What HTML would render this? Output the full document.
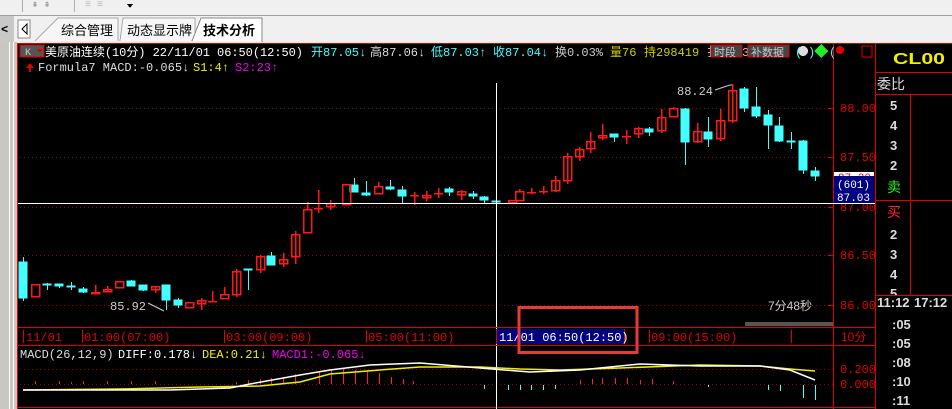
<!DOCTYPE html>
<html><head><meta charset="utf-8"><style>
html,body{margin:0;padding:0;width:952px;height:409px;overflow:hidden;background:#f0f0f0}
svg{position:absolute;left:0;top:0;font-family:"Liberation Mono","Noto Sans CJK SC",monospace;font-size:12px}
.cn{font-family:"Liberation Sans","Noto Sans CJK SC",sans-serif}
</style></head><body>
<svg width="952" height="409" viewBox="0 0 952 409" xmlns="http://www.w3.org/2000/svg" shape-rendering="crispEdges">
<rect x="0" y="0" width="952" height="15" fill="#f0f0f0"/>
<line x1="0" y1="15.5" x2="952" y2="15.5" stroke="#a0a0a0"/>
<line x1="22.5" y1="0" x2="22.5" y2="12" stroke="#b0b0b0"/>
<line x1="74.5" y1="0" x2="74.5" y2="12" stroke="#b0b0b0"/>
<text x="32" y="7" fill="#999" font-size="10">⇞ ⇞</text>
<text x="85" y="7" fill="#bbb" font-size="10">≡ ≡</text>
<path d="M127 4 L133 4 L130 8 Z" fill="#000"/>
<rect x="0" y="16" width="952" height="27" fill="#f0f0f0"/>
<rect x="0" y="16" width="14" height="26" fill="#c8c8c8"/>
<text x="1" y="33" fill="#000" font-size="12" font-weight="bold">&lt;</text>
<rect x="18" y="20" width="12" height="18" fill="#fff" stroke="#888"/>
<path d="M27 24 L22 29 L27 34 Z" fill="none" stroke="#000"/>
<path d="M35 41 L58 18 L118 18 L118 41" fill="#f6f6f6" stroke="#aaa"/>
<text x="61" y="35" class="cn" font-size="13" fill="#000">综合管理</text>
<path d="M120 41 L123 18 L195 18 L195 41" fill="#f6f6f6" stroke="#aaa"/>
<text x="127" y="35" class="cn" font-size="13" fill="#000">动态显示牌</text>
<path d="M192 41 L201 18 L262 18 L262 42" fill="#fff" stroke="#888"/>
<text x="203" y="35" class="cn" font-size="13" font-weight="bold" fill="#000">技术分析</text>
<rect x="0" y="42" width="17" height="367" fill="#c8c8c0"/>
<line x1="9.5" y1="42" x2="9.5" y2="409" stroke="#fff"/>
<line x1="13.5" y1="42" x2="13.5" y2="409" stroke="#fff"/>
<rect x="17" y="43" width="935" height="366" fill="#000"/>
<line x1="17" y1="43.5" x2="952" y2="43.5" stroke="#e00000"/>
<line x1="17.5" y1="43" x2="17.5" y2="409" stroke="#e00000"/>
<line x1="833.5" y1="44" x2="833.5" y2="409" stroke="#e00000"/>
<line x1="875.5" y1="44" x2="875.5" y2="409" stroke="#e00000"/>
<line x1="17" y1="407.5" x2="875" y2="407.5" stroke="#e00000"/>
<rect x="20" y="45" width="24" height="12" fill="#555" stroke="#e00000"/>
<text x="25" y="55" fill="#ccc" font-size="10">K</text>
<path d="M37 49 L43 49 L40 53 Z" fill="#e00000"/>
<text x="45" y="56" fill="#fff" textLength="258">美原油连续(10分) 22/11/01 06:50(12:50)</text>
<text x="311" y="56" fill="#4ff">开87.05↓</text>
<text x="370" y="56" fill="#ddd">高87.06↓</text>
<text x="431" y="56" fill="#4ff">低87.03↑</text>
<text x="493" y="56" fill="#4ff">收87.04↓</text>
<text x="555" y="56" fill="#ccc">换0.03%</text>
<text x="610" y="56" fill="#cc0">量76</text>
<text x="644" y="56" fill="#cc0">持298419</text>
<text x="707" y="56" fill="#ccc">扌</text>
<rect x="711" y="45" width="31" height="12" fill="#444" stroke="#e00000"/>
<text x="714" y="56" fill="#ccc" class="cn" font-size="11">时段</text>
<text x="742" y="56" fill="#ccc">3</text>
<rect x="748" y="45" width="41" height="12" fill="#444" stroke="#e00000"/>
<text x="751" y="56" fill="#ccc" class="cn" font-size="11">补数据</text>
<circle cx="803" cy="51" r="5" fill="#ddd"/>
<text x="795" y="56" fill="#4ff">(</text><text x="808" y="56" fill="#4ff">)</text>
<path d="M821 44 L828 51 L821 58 L814 51 Z" fill="#2e2"/>
<text x="829" y="56" fill="#4ff">(</text>
<circle cx="840" cy="50" r="4" fill="#e00000"/>
<rect x="862" y="46" width="10" height="11" fill="none" stroke="#e00000"/>
<path d="M26 68 L30 63 L34 68 Z M29 67 h2 v5 h-2z" fill="#e00000"/>
<text x="38" y="71" fill="#ddd">Formula7 MACD:-0.065↓</text>
<text x="193" y="71" fill="#ee0">S1:4↑</text>
<text x="235" y="71" fill="#e0e">S2:23↑</text>
<g stroke="#a00000" stroke-dasharray="1,3">
<line x1="20" y1="108.5" x2="833" y2="108.5"/>
<line x1="20" y1="157.5" x2="833" y2="157.5"/>
<line x1="20" y1="207.5" x2="833" y2="207.5"/>
<line x1="20" y1="255.5" x2="833" y2="255.5"/>
<line x1="20" y1="305.5" x2="833" y2="305.5"/>
<line x1="20" y1="369.5" x2="833" y2="369.5"/>
<line x1="20" y1="384.5" x2="833" y2="384.5"/>
</g>
<g fill="#e00000" font-size="12">
<text x="840" y="112">88.00</text>
<text x="840" y="161">87.50</text>
<text x="840" y="211">87.00</text>
<text x="840" y="259">86.50</text>
<text x="840" y="309">86.00</text>
<text x="840" y="373">0.200</text>
<text x="840" y="388">0.000</text>
</g>
<g stroke="#e00000"><line x1="828" y1="108.5" x2="833" y2="108.5"/><line x1="828" y1="157.5" x2="833" y2="157.5"/><line x1="828" y1="207.5" x2="833" y2="207.5"/><line x1="828" y1="255.5" x2="833" y2="255.5"/><line x1="828" y1="305.5" x2="833" y2="305.5"/></g>
<g stroke-width="1">
<g stroke="#4ff" fill="#4ff">
<line x1="23.5" y1="257" x2="23.5" y2="301"/><rect x="19" y="262" width="8" height="36"/>
<line x1="47.5" y1="283" x2="47.5" y2="290"/><rect x="43" y="284" width="8" height="1"/>
<line x1="59.5" y1="284" x2="59.5" y2="288"/><rect x="55" y="284" width="8" height="2"/>
<line x1="71.5" y1="282" x2="71.5" y2="290"/><rect x="67" y="286" width="8" height="1"/>
<line x1="83.5" y1="287" x2="83.5" y2="293"/><rect x="79" y="289" width="8" height="3"/>
<line x1="131.5" y1="280" x2="131.5" y2="286"/><rect x="127" y="281" width="8" height="5"/>
<line x1="143.5" y1="285" x2="143.5" y2="291"/><rect x="139" y="285" width="8" height="5"/>
<line x1="166.5" y1="285" x2="166.5" y2="310"/><rect x="162" y="285" width="8" height="15"/>
<line x1="178.5" y1="298" x2="178.5" y2="308"/><rect x="174" y="300" width="8" height="5"/>
<line x1="248.5" y1="269" x2="248.5" y2="290"/><rect x="244" y="269" width="8" height="1"/>
<line x1="271.5" y1="252" x2="271.5" y2="265"/><rect x="267" y="256" width="8" height="9"/>
<line x1="354.5" y1="178" x2="354.5" y2="192"/><rect x="350" y="185" width="8" height="7"/>
<line x1="366.5" y1="181" x2="366.5" y2="196"/><rect x="362" y="193" width="8" height="2"/>
<line x1="390.5" y1="180" x2="390.5" y2="190"/><rect x="386" y="187" width="8" height="2"/>
<line x1="402.5" y1="186" x2="402.5" y2="203"/><rect x="398" y="190" width="8" height="6"/>
<line x1="449.5" y1="187" x2="449.5" y2="196"/><rect x="445" y="189" width="8" height="3"/>
<line x1="473.5" y1="191" x2="473.5" y2="199"/><rect x="469" y="194" width="8" height="2"/>
<line x1="484.5" y1="196" x2="484.5" y2="203"/><rect x="480" y="197" width="8" height="3"/>
<line x1="496.5" y1="199" x2="496.5" y2="203"/><rect x="492" y="201" width="8" height="1"/>
<line x1="614.5" y1="134" x2="614.5" y2="142"/><rect x="610" y="134" width="8" height="3"/>
<line x1="649.5" y1="127" x2="649.5" y2="136"/><rect x="645" y="129" width="8" height="3"/>
<line x1="685.5" y1="108" x2="685.5" y2="165"/><rect x="681" y="109" width="8" height="33"/>
<line x1="708.5" y1="117" x2="708.5" y2="147"/><rect x="704" y="132" width="8" height="7"/>
<line x1="744.5" y1="87" x2="744.5" y2="112"/><rect x="740" y="89" width="8" height="19"/>
<line x1="756.5" y1="87" x2="756.5" y2="118"/><rect x="752" y="107" width="8" height="9"/>
<line x1="768.5" y1="110" x2="768.5" y2="149"/><rect x="764" y="115" width="8" height="10"/>
<line x1="779.5" y1="117" x2="779.5" y2="142"/><rect x="775" y="126" width="8" height="15"/>
<line x1="791.5" y1="132" x2="791.5" y2="149"/><rect x="787" y="141" width="8" height="1"/>
<line x1="803.5" y1="140" x2="803.5" y2="174"/><rect x="799" y="141" width="8" height="29"/>
<line x1="815.5" y1="167" x2="815.5" y2="181"/><rect x="811" y="171" width="8" height="5"/>
</g>
<g stroke="#ff1818" fill="none" stroke-width="1.5">
<rect x="31.5" y="284.5" width="8" height="12"/>
<line x1="95.5" y1="285" x2="95.5" y2="293"/><rect x="91.5" y="292.5" width="8" height="1" fill="#f22"/>
<line x1="107.5" y1="286" x2="107.5" y2="292"/><rect x="103.5" y="289.5" width="8" height="2"/>
<rect x="115.5" y="281.5" width="8" height="6"/>
<line x1="155.5" y1="286" x2="155.5" y2="293"/><rect x="151.5" y="286.5" width="8" height="3"/>
<rect x="185.5" y="302.5" width="8" height="5"/>
<line x1="201.5" y1="298" x2="201.5" y2="310"/><rect x="197.5" y="300.5" width="8" height="3"/>
<line x1="212.5" y1="291" x2="212.5" y2="301"/><line x1="208" y1="301.5" x2="217" y2="301.5"/>
<line x1="224.5" y1="287" x2="224.5" y2="294"/><rect x="220.5" y="294.5" width="8" height="4"/>
<line x1="236.5" y1="269" x2="236.5" y2="297"/><rect x="232.5" y="271.5" width="8" height="23"/>
<line x1="260.5" y1="255" x2="260.5" y2="273"/><rect x="256.5" y="256.5" width="8" height="13"/>
<line x1="283.5" y1="253" x2="283.5" y2="267"/><rect x="279.5" y="259.5" width="8" height="4"/>
<line x1="295.5" y1="231" x2="295.5" y2="264"/><rect x="291.5" y="234.5" width="8" height="22"/>
<line x1="307.5" y1="202" x2="307.5" y2="209"/><rect x="303.5" y="209.5" width="8" height="23"/>
<line x1="318.5" y1="190" x2="318.5" y2="213"/><line x1="314" y1="208.5" x2="323" y2="208.5"/>
<line x1="330.5" y1="200" x2="330.5" y2="210"/><rect x="326.5" y="203.5" width="8" height="3"/>
<rect x="342.5" y="184.5" width="8" height="20"/>
<line x1="378.5" y1="182" x2="378.5" y2="186"/><rect x="374.5" y="186.5" width="8" height="7"/>
<line x1="414.5" y1="192" x2="414.5" y2="205"/><line x1="410" y1="195.5" x2="419" y2="195.5"/>
<line x1="426.5" y1="191" x2="426.5" y2="201"/><rect x="422.5" y="195.5" width="8" height="2"/>
<line x1="438.5" y1="188" x2="438.5" y2="198"/><line x1="434" y1="193.5" x2="443" y2="193.5"/>
<line x1="461.5" y1="190" x2="461.5" y2="200"/><rect x="457.5" y="191.5" width="8" height="3"/>
<rect x="508.5" y="200.5" width="8" height="2"/>
<line x1="519.5" y1="189" x2="519.5" y2="191"/><rect x="515.5" y="191.5" width="8" height="9"/>
<line x1="531.5" y1="188" x2="531.5" y2="194"/><line x1="527" y1="192.5" x2="536" y2="192.5"/>
<line x1="543.5" y1="186" x2="543.5" y2="194"/><line x1="539" y1="191.5" x2="548" y2="191.5"/>
<line x1="555.5" y1="176" x2="555.5" y2="192"/><rect x="551.5" y="180.5" width="8" height="10"/>
<line x1="567.5" y1="153" x2="567.5" y2="184"/><rect x="563.5" y="156.5" width="8" height="24"/>
<line x1="579.5" y1="147" x2="579.5" y2="161"/><rect x="575.5" y="149.5" width="8" height="7"/>
<line x1="590.5" y1="132" x2="590.5" y2="153"/><rect x="586.5" y="141.5" width="8" height="7"/>
<line x1="602.5" y1="124" x2="602.5" y2="140"/><rect x="598.5" y="135.5" width="8" height="2"/>
<line x1="626.5" y1="130" x2="626.5" y2="144"/><line x1="622" y1="136.5" x2="631" y2="136.5"/>
<line x1="638.5" y1="127" x2="638.5" y2="138"/><rect x="634.5" y="128.5" width="8" height="5"/>
<line x1="661.5" y1="109" x2="661.5" y2="133"/><rect x="657.5" y="117.5" width="8" height="13"/>
<line x1="673.5" y1="107" x2="673.5" y2="108"/><rect x="669.5" y="108.5" width="8" height="8"/>
<line x1="697.5" y1="123" x2="697.5" y2="143"/><rect x="693.5" y="131.5" width="8" height="10"/>
<line x1="720.5" y1="109" x2="720.5" y2="141"/><rect x="716.5" y="120.5" width="8" height="18"/>
<line x1="732.5" y1="84" x2="732.5" y2="123"/><rect x="728.5" y="90.5" width="8" height="30"/>
</g>
</g>
<text x="110" y="310" fill="#ccc">85.92</text>
<line x1="148" y1="303" x2="164" y2="311" stroke="#ccc" shape-rendering="auto"/>
<text x="677" y="95" fill="#ccc">88.24</text>
<path d="M715 90 L730 85 L732 85" stroke="#ccc" fill="none" shape-rendering="auto"/>
<text x="768" y="310" fill="#ccc" class="cn" font-size="12">7分48秒</text>
<rect x="745" y="322" width="88" height="4" fill="#555"/>
<line x1="18" y1="203.5" x2="875" y2="203.5" stroke="#fff"/>
<line x1="496.5" y1="83" x2="496.5" y2="409" stroke="#fff"/>
<rect x="834" y="172" width="40" height="5" fill="#fff"/>
<text x="838" y="181" fill="#e00000" font-size="11">87.20</text>
<rect x="834" y="176" width="40" height="27" fill="#000080"/>
<text x="837" y="188" fill="#fff" font-size="11">(601)</text>
<text x="837" y="201" fill="#fff" font-size="11">87.03</text>
<line x1="17" y1="327.5" x2="875" y2="327.5" stroke="#e00000"/>
<line x1="17" y1="345.5" x2="875" y2="345.5" stroke="#e00000"/>
<g stroke="#e00000">
<line x1="23.5" y1="330" x2="23.5" y2="343"/><line x1="82.5" y1="330" x2="82.5" y2="343"/>
<line x1="224.5" y1="330" x2="224.5" y2="343"/><line x1="366.5" y1="330" x2="366.5" y2="343"/>
<line x1="649.5" y1="330" x2="649.5" y2="343"/><line x1="791.5" y1="330" x2="791.5" y2="343"/>
</g>
<g fill="#e00000">
<text x="26" y="341">11/01</text>
<text x="84" y="341">01:00(07:00)</text>
<text x="226" y="341">03:00(09:00)</text>
<text x="368" y="341">05:00(11:00)</text>
<text x="651" y="341">09:00(15:00)</text>
<text x="841" y="341" class="cn">10分</text>
</g>
<rect x="496" y="329" width="128" height="15" fill="#000080"/>
<line x1="496.5" y1="329" x2="496.5" y2="344" stroke="#e00000"/>
<line x1="624.5" y1="329" x2="624.5" y2="344" stroke="#e00000"/>
<text x="499" y="341" fill="#fff">11/01 06:50(12:50)</text>
<rect x="519" y="307.5" width="118" height="45" fill="none" stroke="#e83838" stroke-width="3"/>
<text x="20" y="358" fill="#ddd">MACD(26,12,9)</text>
<text x="118" y="358" fill="#fff">DIFF:0.178↓</text>
<text x="202" y="358" fill="#ee0">DEA:0.21↓</text>
<text x="272" y="358" fill="#e0e">MACD1:-0.065↓</text>
<g stroke="#f22">
<line x1="35.5" y1="381" x2="35.5" y2="384"/><line x1="59.5" y1="381" x2="59.5" y2="384"/><line x1="71.5" y1="382" x2="71.5" y2="384"/><line x1="83.5" y1="381" x2="83.5" y2="384"/><line x1="107.5" y1="381" x2="107.5" y2="384"/><line x1="131.5" y1="381" x2="131.5" y2="384"/><line x1="155.5" y1="381" x2="155.5" y2="384"/><line x1="236.5" y1="382" x2="236.5" y2="384"/>
<line x1="248.5" y1="380" x2="248.5" y2="384"/><line x1="260.5" y1="379" x2="260.5" y2="384"/><line x1="271.5" y1="378" x2="271.5" y2="384"/><line x1="283.5" y1="377" x2="283.5" y2="384"/><line x1="295.5" y1="374" x2="295.5" y2="384"/><line x1="319.5" y1="371" x2="319.5" y2="384"/><line x1="331.5" y1="370" x2="331.5" y2="384"/><line x1="343.5" y1="369" x2="343.5" y2="384"/><line x1="355.5" y1="370" x2="355.5" y2="384"/><line x1="367.5" y1="371" x2="367.5" y2="384"/><line x1="379.5" y1="373" x2="379.5" y2="384"/><line x1="391.5" y1="377" x2="391.5" y2="384"/><line x1="403.5" y1="379" x2="403.5" y2="384"/><line x1="413.5" y1="381" x2="413.5" y2="384"/>
<line x1="580.5" y1="380" x2="580.5" y2="384"/><line x1="592.5" y1="379" x2="592.5" y2="384"/><line x1="602.5" y1="378" x2="602.5" y2="384"/><line x1="615.5" y1="378" x2="615.5" y2="384"/><line x1="627.5" y1="378" x2="627.5" y2="384"/><line x1="640.5" y1="380" x2="640.5" y2="384"/><line x1="652.5" y1="379" x2="652.5" y2="384"/><line x1="673.5" y1="381" x2="673.5" y2="384"/>
</g>
<g stroke="#4ff">
<line x1="484.5" y1="385" x2="484.5" y2="389"/><line x1="508.5" y1="385" x2="508.5" y2="390"/><line x1="520.5" y1="385" x2="520.5" y2="390"/><line x1="531.5" y1="385" x2="531.5" y2="390"/><line x1="543.5" y1="385" x2="543.5" y2="390"/><line x1="555.5" y1="385" x2="555.5" y2="389"/><line x1="708.5" y1="385" x2="708.5" y2="387"/><line x1="768.5" y1="385" x2="768.5" y2="390"/><line x1="780.5" y1="385" x2="780.5" y2="391"/><line x1="803.5" y1="385" x2="803.5" y2="398"/><line x1="815.5" y1="385" x2="815.5" y2="400"/>
</g>
<polyline fill="none" stroke="#ee0" stroke-width="1.5" shape-rendering="auto" points="23,390 120,389 200,387 260,386 300,382 330,374 380,370 420,367 480,367 520,369 560,370 620,368 700,365 760,366 790,369 815,371"/>
<polyline fill="none" stroke="#fff" stroke-width="1.5" shape-rendering="auto" points="23,390 170,390 230,388 250,384 300,375 330,370 370,365 420,363 480,368 530,372 580,370 640,364 700,366 760,366 790,370 815,380"/>
<text x="893" y="64" fill="#ee0" font-size="16" font-weight="bold" font-family="Liberation Sans,sans-serif" textLength="52" lengthAdjust="spacingAndGlyphs">CL00</text>
<line x1="876" y1="72.5" x2="952" y2="72.5" stroke="#e00000"/>
<text x="877" y="89" fill="#ddd" class="cn" font-size="14">委比</text>
<line x1="876" y1="94.5" x2="952" y2="94.5" stroke="#e00000"/>
<line x1="910.5" y1="95" x2="910.5" y2="295" stroke="#e00000"/>
<line x1="876" y1="200.5" x2="952" y2="200.5" stroke="#e00000"/>
<g fill="#ddd" font-family="Liberation Sans,sans-serif" font-size="13" font-weight="bold">
<text x="890" y="110">5</text><text x="890" y="130">4</text><text x="890" y="150">3</text><text x="890" y="170">2</text>
<text x="890" y="239">2</text><text x="890" y="259">3</text><text x="890" y="279">4</text><text x="890" y="298">5</text>
</g>
<text x="887" y="192" fill="#2e2" class="cn" font-size="14">卖</text>
<text x="887" y="217" fill="#f22" class="cn" font-size="14">买</text>
<rect x="876" y="296" width="76" height="113" fill="#000"/>
<line x1="876" y1="295.5" x2="952" y2="295.5" stroke="#e00000"/>
<g fill="#ddd" font-family="Liberation Sans,sans-serif" font-size="13" font-weight="bold">
<text x="877" y="307">11:12</text><text x="914" y="307">17:12</text>
<text x="892" y="329">:05</text><text x="892" y="348">:05</text><text x="892" y="367">:08</text><text x="892" y="386">:10</text><text x="892" y="405">:11</text>
</g>
</svg>
</body></html>
